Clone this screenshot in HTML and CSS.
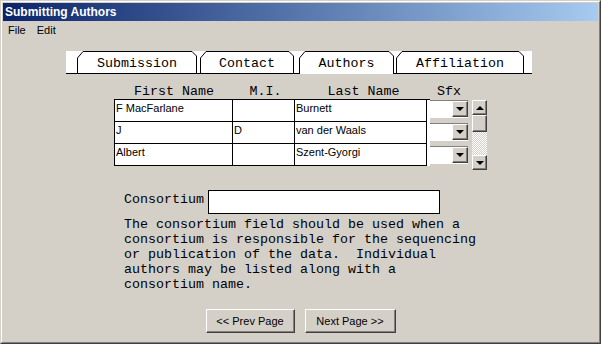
FILE: index.html
```html
<!DOCTYPE html>
<html lang="en">
<head>
  <meta charset="UTF-8">
  <title>Submitting Authors</title>
  <link rel="stylesheet" href="styles.css">
</head>
<body>

<div class="window">
  <div class="frame">
    <div class="titlebar">Submitting Authors</div>
    <div class="menubar">
      <span class="menu-item">File</span>
      <span class="menu-item">Edit</span>
    </div>

    <div class="content">
      <div class="tabs">
        <div class="tab tab-submission">
          <svg width="120" height="22"><path d="M0.5 22 V7 L6 0.5 H115 L119.5 5 V22"/></svg>
          <span>Submission</span>
        </div>
        <div class="tab tab-contact">
          <svg width="94" height="22"><path d="M0.5 22 V7 L6 0.5 H89 L93.5 5 V22"/></svg>
          <span>Contact</span>
        </div>
        <div class="tab tab-authors selected">
          <svg width="95" height="23"><path d="M0.5 23 V7 L6 0.5 H90 L94.5 5 V23"/></svg>
          <span>Authors</span>
        </div>
        <div class="tab tab-affiliation">
          <svg width="128" height="22"><path d="M0.5 22 V7 L6 0.5 H123 L127.5 5 V22"/></svg>
          <span>Affiliation</span>
        </div>
      </div>

      <div class="authors">
        <div class="names">
          <div class="heads">
            <div>First Name</div>
            <div>M.I.</div>
            <div>Last Name</div>
          </div>
          <div class="grid">
            <div class="cell">F MacFarlane</div>
            <div class="cell"></div>
            <div class="cell">Burnett</div>
            <div class="cell">J</div>
            <div class="cell">D</div>
            <div class="cell">van der Waals</div>
            <div class="cell">Albert</div>
            <div class="cell"></div>
            <div class="cell">Szent-Gyorgi</div>
          </div>
        </div>

        <div class="sfx">
          <div class="head">Sfx</div>
          <div class="combo"><div class="combo-field"></div><div class="combo-btn"><span class="arrow-down"></span></div></div>
          <div class="combo"><div class="combo-field"></div><div class="combo-btn"><span class="arrow-down"></span></div></div>
          <div class="combo"><div class="combo-field"></div><div class="combo-btn"><span class="arrow-down"></span></div></div>
        </div>

        <div class="vscroll">
          <div class="sb-btn"><span class="arrow-up"></span></div>
          <div class="sb-thumb"></div>
          <div class="sb-track"></div>
          <div class="sb-btn"><span class="arrow-down"></span></div>
        </div>
      </div>

      <div class="consortium">
        <label>Consortium</label>
        <div class="textbox"></div>
      </div>
      <p class="note">The consortium field should be used when a consortium is responsible for the sequencing or publication of the data.  Individual authors may be listed along with a consortium name.</p>

      <div class="nav">
        <button class="btn btn-prev">&lt;&lt; Prev Page</button>
        <button class="btn btn-next">Next Page &gt;&gt;</button>
      </div>
    </div>
  </div>
</div>

</body>
</html>
```

FILE: styles.css
```css
body {
  margin: 0;
  font-family: "Liberation Sans", Arial, sans-serif;
  font-size: 11px;
  background-color: #d4d0c8;
}

.window {
  width: 601px;
  height: 344px;
  box-sizing: border-box;
  border: 1px solid;
  border-color: #d4d0c8 #404040 #404040 #d4d0c8;
}

.frame {
  height: 100%;
  box-sizing: border-box;
  border: 1px solid;
  border-color: #fff #808080 #808080 #fff;
  padding: 1px;
  background-color: #d4d0c8;
}

.titlebar {
  height: 18px;
  box-sizing: border-box;
  padding: 2px 0 0 2px;
  line-height: 14px;
  font-size: 12px;
  font-weight: bold;
  color: #fff;
  background: linear-gradient(to right, #0a246a, #a6caf0);
}

.menubar {
  height: 19px;
  box-sizing: border-box;
  padding: 3px 0 0 5px;
  line-height: 13px;
  display: flex;
  gap: 11px;
}

.menu-item {
  color: #000;
}

/* tabs */

.tabs {
  display: flex;
  width: 455px;
  height: 22px;
  margin: 11px 0 0 63px;
  padding-left: 11px;
  background-color: #fff;
  border-bottom: 1px solid #000;
}

.tab {
  position: relative;
  height: 22px;
  display: flex;
  justify-content: center;
  padding-top: 5px;
  box-sizing: border-box;
  font-family: "Liberation Mono", "Courier New", monospace;
  font-size: 13.33px;
  line-height: 15px;
}

.tab svg {
  position: absolute;
  left: 0;
  top: 0;
}

.tab path {
  fill: none;
  stroke: #000;
  stroke-width: 1;
}

.tab.selected path {
  fill: #fff;
}

.tab span {
  position: relative;
}

.tab-submission { width: 120px; margin-right: 3px; }
.tab-contact { width: 94px; margin-right: 5px; }
.tab-authors { width: 95px; margin-right: 2px; }
.tab-affiliation { width: 128px; }

/* author grid */

.authors {
  display: flex;
  margin: 10px 0 0 111px;
}

.heads, .sfx .head {
  height: 15px;
  line-height: 15px;
  font-family: "Liberation Mono", "Courier New", monospace;
  font-size: 13.33px;
  text-align: center;
}

.heads {
  display: grid;
  grid-template-columns: 120px 63px 133px;
}

.grid {
  display: grid;
  grid-template-columns: 118px 62px 132px;
  grid-auto-rows: 22px;
  border-top: 1px solid #000;
  border-left: 1px solid #000;
  background-color: #fff;
}

.cell {
  border-right: 1px solid #000;
  border-bottom: 1px solid #000;
  padding: 2px 0 0 1px;
  line-height: 13px;
}

.sfx {
  width: 38px;
}

.sfx .head {
  margin-bottom: 1px;
}

.combo {
  display: flex;
  height: 18px;
  margin-bottom: 5px;
  box-sizing: border-box;
  border-top: 1px solid #808080;
  background-color: #fff;
}

.combo-field {
  flex: 1;
}

.combo-btn, .sb-btn, .sb-thumb {
  box-sizing: border-box;
  border: 1px solid;
  border-color: #fff #404040 #404040 #fff;
  box-shadow: inset -1px -1px #808080;
  background-color: #d4d0c8;
  display: flex;
  align-items: center;
  justify-content: center;
}

.combo-btn {
  width: 16px;
  height: 16px;
}

.arrow-down, .arrow-up {
  width: 0;
  height: 0;
  border-left: 4px solid transparent;
  border-right: 4px solid transparent;
}

.arrow-down {
  border-top: 4px solid #000;
}

.arrow-up {
  border-bottom: 4px solid #000;
}

.vscroll {
  width: 15px;
  margin: 16px 0 0 4px;
}

.sb-btn {
  height: 15px;
}

.sb-thumb {
  height: 17px;
}

.sb-track {
  height: 23px;
  background: repeating-conic-gradient(#d4d0c8 0 25%, #fff 0 50%) 0 0 / 2px 2px;
}

/* consortium */

.consortium {
  display: flex;
  margin: 20px 0 0 121px;
}

.consortium label, .note {
  font-family: "Liberation Mono", "Courier New", monospace;
  font-size: 13.33px;
  line-height: 15px;
}

.consortium label {
  padding-top: 2px;
  margin-right: 4px;
}

.textbox {
  width: 232px;
  height: 24px;
  box-sizing: border-box;
  border: 1px solid #000;
  background-color: #fff;
}

.note {
  width: 356px;
  margin: 3px 0 0 121px;
  white-space: pre-wrap;
}

.nav {
  display: flex;
  justify-content: center;
  gap: 10px;
  margin-top: 17px;
}

.btn {
  height: 24px;
  padding: 0;
  font-family: "Liberation Sans", Arial, sans-serif;
  font-size: 11px;
  color: #000;
  background-color: #d4d0c8;
  border: 1px solid;
  border-color: #fff #404040 #404040 #fff;
  box-shadow: inset -1px -1px #808080;
}

.btn-prev { width: 89px; }
.btn-next { width: 91px; }
```
